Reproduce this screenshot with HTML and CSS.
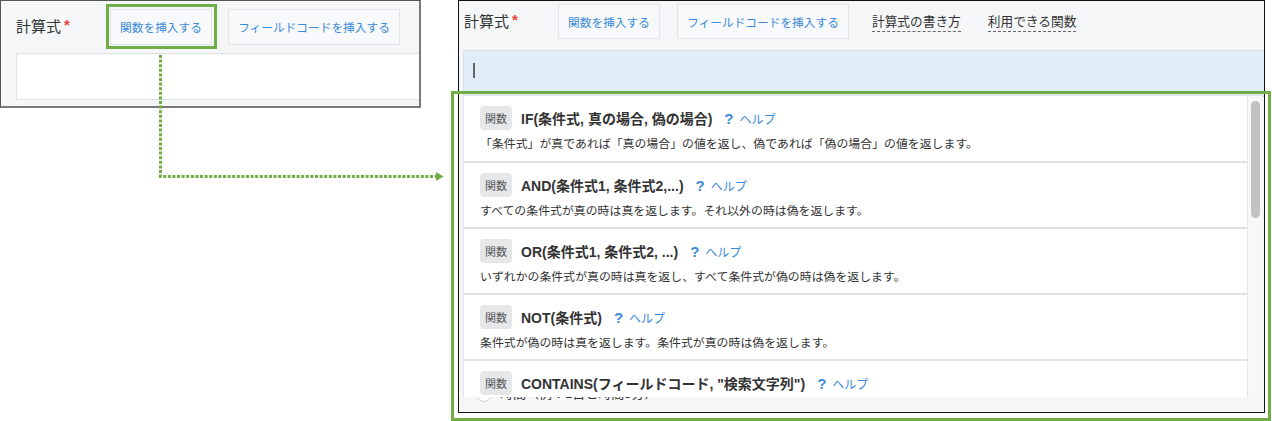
FILE: index.html
```html
<!DOCTYPE html>
<html lang="ja">
<head>
<meta charset="utf-8">
<title>計算式</title>
<link rel="stylesheet" href="styles.css">
</head>
<body>
<div class="stage">
  <div class="panels">
    <!-- before: formula field, collapsed -->
    <section class="shot shot-small">
      <div class="field-head field-head-small">
        <span class="field-label">計算式<span class="req">*</span></span>
        <span class="btn">関数を挿入する</span>
        <span class="btn btn-wide">フィールドコードを挿入する</span>
      </div>
      <div class="formula-input formula-input-small"></div>
    </section>

    <!-- after: function picker opened -->
    <section class="shot shot-large">
      <div class="field-head">
        <span class="field-label">計算式<span class="req">*</span></span>
        <span class="btn">関数を挿入する</span>
        <span class="btn btn-wide">フィールドコードを挿入する</span>
        <span class="doc-link doc-link-first">計算式の書き方</span>
        <span class="doc-link">利用できる関数</span>
      </div>
      <div class="formula-input formula-input-active"><span class="caret"></span></div>
      <div class="radio-row"><span class="radio"></span><span class="radio-text">時間（例：1日と時間8分）</span></div>

      <div class="fn-menu">
        <ul class="fn-list">
          <li class="fn-item fn-item-first">
            <div class="fn-head"><span class="badge">関数</span><span class="fn-name">IF(条件式, 真の場合, 偽の場合)</span><span class="help"><b>?</b>ヘルプ</span></div>
            <p class="fn-desc">「条件式」が真であれば「真の場合」の値を返し、偽であれば「偽の場合」の値を返します。</p>
          </li>
          <li class="fn-item">
            <div class="fn-head"><span class="badge">関数</span><span class="fn-name">AND(条件式1, 条件式2,...)</span><span class="help"><b>?</b>ヘルプ</span></div>
            <p class="fn-desc">すべての条件式が真の時は真を返します。それ以外の時は偽を返します。</p>
          </li>
          <li class="fn-item">
            <div class="fn-head"><span class="badge">関数</span><span class="fn-name">OR(条件式1, 条件式2, ...)</span><span class="help"><b>?</b>ヘルプ</span></div>
            <p class="fn-desc">いずれかの条件式が真の時は真を返し、すべて条件式が偽の時は偽を返します。</p>
          </li>
          <li class="fn-item">
            <div class="fn-head"><span class="badge">関数</span><span class="fn-name">NOT(条件式)</span><span class="help"><b>?</b>ヘルプ</span></div>
            <p class="fn-desc">条件式が偽の時は真を返します。条件式が真の時は偽を返します。</p>
          </li>
          <li class="fn-item">
            <div class="fn-head"><span class="badge">関数</span><span class="fn-name">CONTAINS(フィールドコード, "検索文字列")</span><span class="help"><b>?</b>ヘルプ</span></div>
            <p class="fn-desc">フィールドに指定した文字列が含まれる場合は真を返します。</p>
          </li>
        </ul>
        <div class="scroll-track"><div class="scroll-thumb"></div></div>
      </div>
    </section>
  </div>

  <!-- callout marks -->
  <div class="mark mark-button"></div>
  <div class="mark mark-menu"></div>
  <svg class="connector" width="1272" height="421" viewBox="0 0 1272 421">
    <path d="M160.5 55 V176.5 H437" fill="none" stroke="#70ad47" stroke-width="3" stroke-dasharray="3 1.6"/>
    <polygon points="436,172 443.5,176.5 436,181" fill="#70ad47"/>
  </svg>
</div>
</body>
</html>
```
FILE: styles.css
```css
html, body {
  margin: 0;
  padding: 0;
  background: #fff;
}

body {
  font-family: "Liberation Sans", "Noto Sans CJK JP", sans-serif;
  color: #333;
}

.stage {
  position: relative;
  width: 1272px;
  height: 421px;
  overflow: hidden;
}

.panels {
  display: flex;
  align-items: flex-start;
}

/* screenshot frames */
.shot {
  box-sizing: border-box;
  background: #f5f6f8;
  overflow: hidden;
}

.shot-small {
  width: 421px;
  height: 108px;
  border-top: 1px solid #555;
  border-left: 1px solid #555;
  border-right: 2px solid #7a7a7a;
  border-bottom: 2px solid #7a7a7a;
  padding: 7px 0 0 15px;
}

.shot-large {
  position: relative;
  width: 807px;
  height: 413px;
  margin-left: 37px;
  border: 1px solid #111;
}

/* field header row */
.field-head {
  display: flex;
  align-items: center;
  height: 49px;
  box-sizing: border-box;
  padding: 3px 0 11px 5px;
}

.field-head-small {
  height: 37px;
  padding: 0;
}

.field-label {
  width: 94px;
  flex: none;
  font-size: 15px;
  line-height: 20px;
  color: #333;
  white-space: nowrap;
}

.req {
  color: #e5483a;
  font-weight: bold;
  font-size: 15px;
  margin-left: 3px;
  position: relative;
  top: -2px;
}

.btn {
  box-sizing: border-box;
  height: 35px;
  width: 102px;
  flex: none;
  display: flex;
  align-items: center;
  justify-content: center;
  background: #f7f9fa;
  border: 1px solid #e2e5e8;
  color: #3c8bd9;
  font-size: 11.7px;
  white-space: nowrap;
}

.field-head-small .btn {
  height: 36px;
}

.btn-wide {
  width: 172px;
  margin-left: 17px;
}

.field-head-small .btn-wide {
  margin-left: 16px;
}

.doc-link {
  margin-left: 27px;
  font-size: 12.7px;
  line-height: 17px;
  color: #333;
  border-bottom: 1px dashed #666;
  white-space: nowrap;
  position: relative;
  top: 1px;
}

.doc-link-first {
  margin-left: 23px;
}

/* formula input */
.formula-input {
  box-sizing: border-box;
  height: 47px;
  background: #fff;
  border: 1px solid #e0e3e6;
  border-right: none;
}

.formula-input-small {
  margin-top: 8px;
  width: 420px;
  box-shadow: inset 0 1px 2px rgba(0, 0, 0, 0.04);
}

.formula-input-active {
  margin-left: 4px;
  background: #e1edf9;
  border-color: #d9e0e7;
  padding: 12px 0 0 9px;
}

.caret {
  display: block;
  width: 2px;
  height: 15px;
  background: #666;
}

/* option row partly covered by the menu */
.radio-row {
  display: flex;
  align-items: center;
  margin-top: 289px;
  padding-left: 17px;
  height: 16px;
}

.radio {
  box-sizing: border-box;
  width: 16px;
  height: 16px;
  border-radius: 50%;
  border: 1px solid #cfd3d7;
  background: #fff;
}

.radio-text {
  margin-left: 8px;
  font-size: 13px;
  line-height: 16px;
  color: #333;
  white-space: nowrap;
}

/* function picker dropdown */
.fn-menu {
  position: absolute;
  top: 94px;
  left: 4px;
  width: 799px;
  height: 302px;
  display: flex;
  background: #fff;
  border-top: 1px solid #e3e6e8;
  box-sizing: border-box;
  overflow: hidden;
}

.fn-list {
  flex: 1;
  margin: 0;
  padding: 0;
  list-style: none;
  border-left: 1px solid #e3e6e8;
  overflow: hidden;
}

.fn-item {
  box-sizing: border-box;
  height: 66px;
  padding: 10px 16px 0 16px;
  border-bottom: 2px solid #dfe2e3;
}

.fn-item-first {
  height: 67px;
}

.fn-head {
  display: flex;
  align-items: center;
  height: 24px;
  white-space: nowrap;
}

.badge {
  box-sizing: border-box;
  width: 32px;
  height: 24px;
  flex: none;
  display: flex;
  align-items: center;
  justify-content: center;
  background: #e5e7e9;
  border-radius: 4px;
  color: #555;
  font-size: 11px;
}

.fn-name {
  margin-left: 9px;
  font-size: 14px;
  font-weight: bold;
  color: #333;
}

.help {
  margin-left: 12px;
  color: #3c8ad8;
  font-size: 12px;
  display: flex;
  align-items: center;
}

.help b {
  font-size: 15px;
  margin-right: 6px;
}

.fn-desc {
  margin: 6px 0 0;
  font-size: 11.9px;
  line-height: 16px;
  color: #333;
  white-space: nowrap;
}

.scroll-track {
  box-sizing: border-box;
  width: 15px;
  flex: none;
  background: #f8f8f8;
  border-left: 1px solid #e8e8e8;
  padding: 5px 0 0 3px;
}

.scroll-thumb {
  width: 9px;
  height: 117px;
  border-radius: 5px;
  background: #c2c2c2;
}

/* callout marks */
.mark {
  position: absolute;
  box-sizing: border-box;
  border: 3px solid #70ad47;
}

.mark-button {
  left: 106px;
  top: 4px;
  width: 111px;
  height: 45px;
}

.mark-menu {
  left: 451px;
  top: 91px;
  width: 820px;
  height: 330px;
}

.connector {
  position: absolute;
  left: 0;
  top: 0;
  pointer-events: none;
}
```
